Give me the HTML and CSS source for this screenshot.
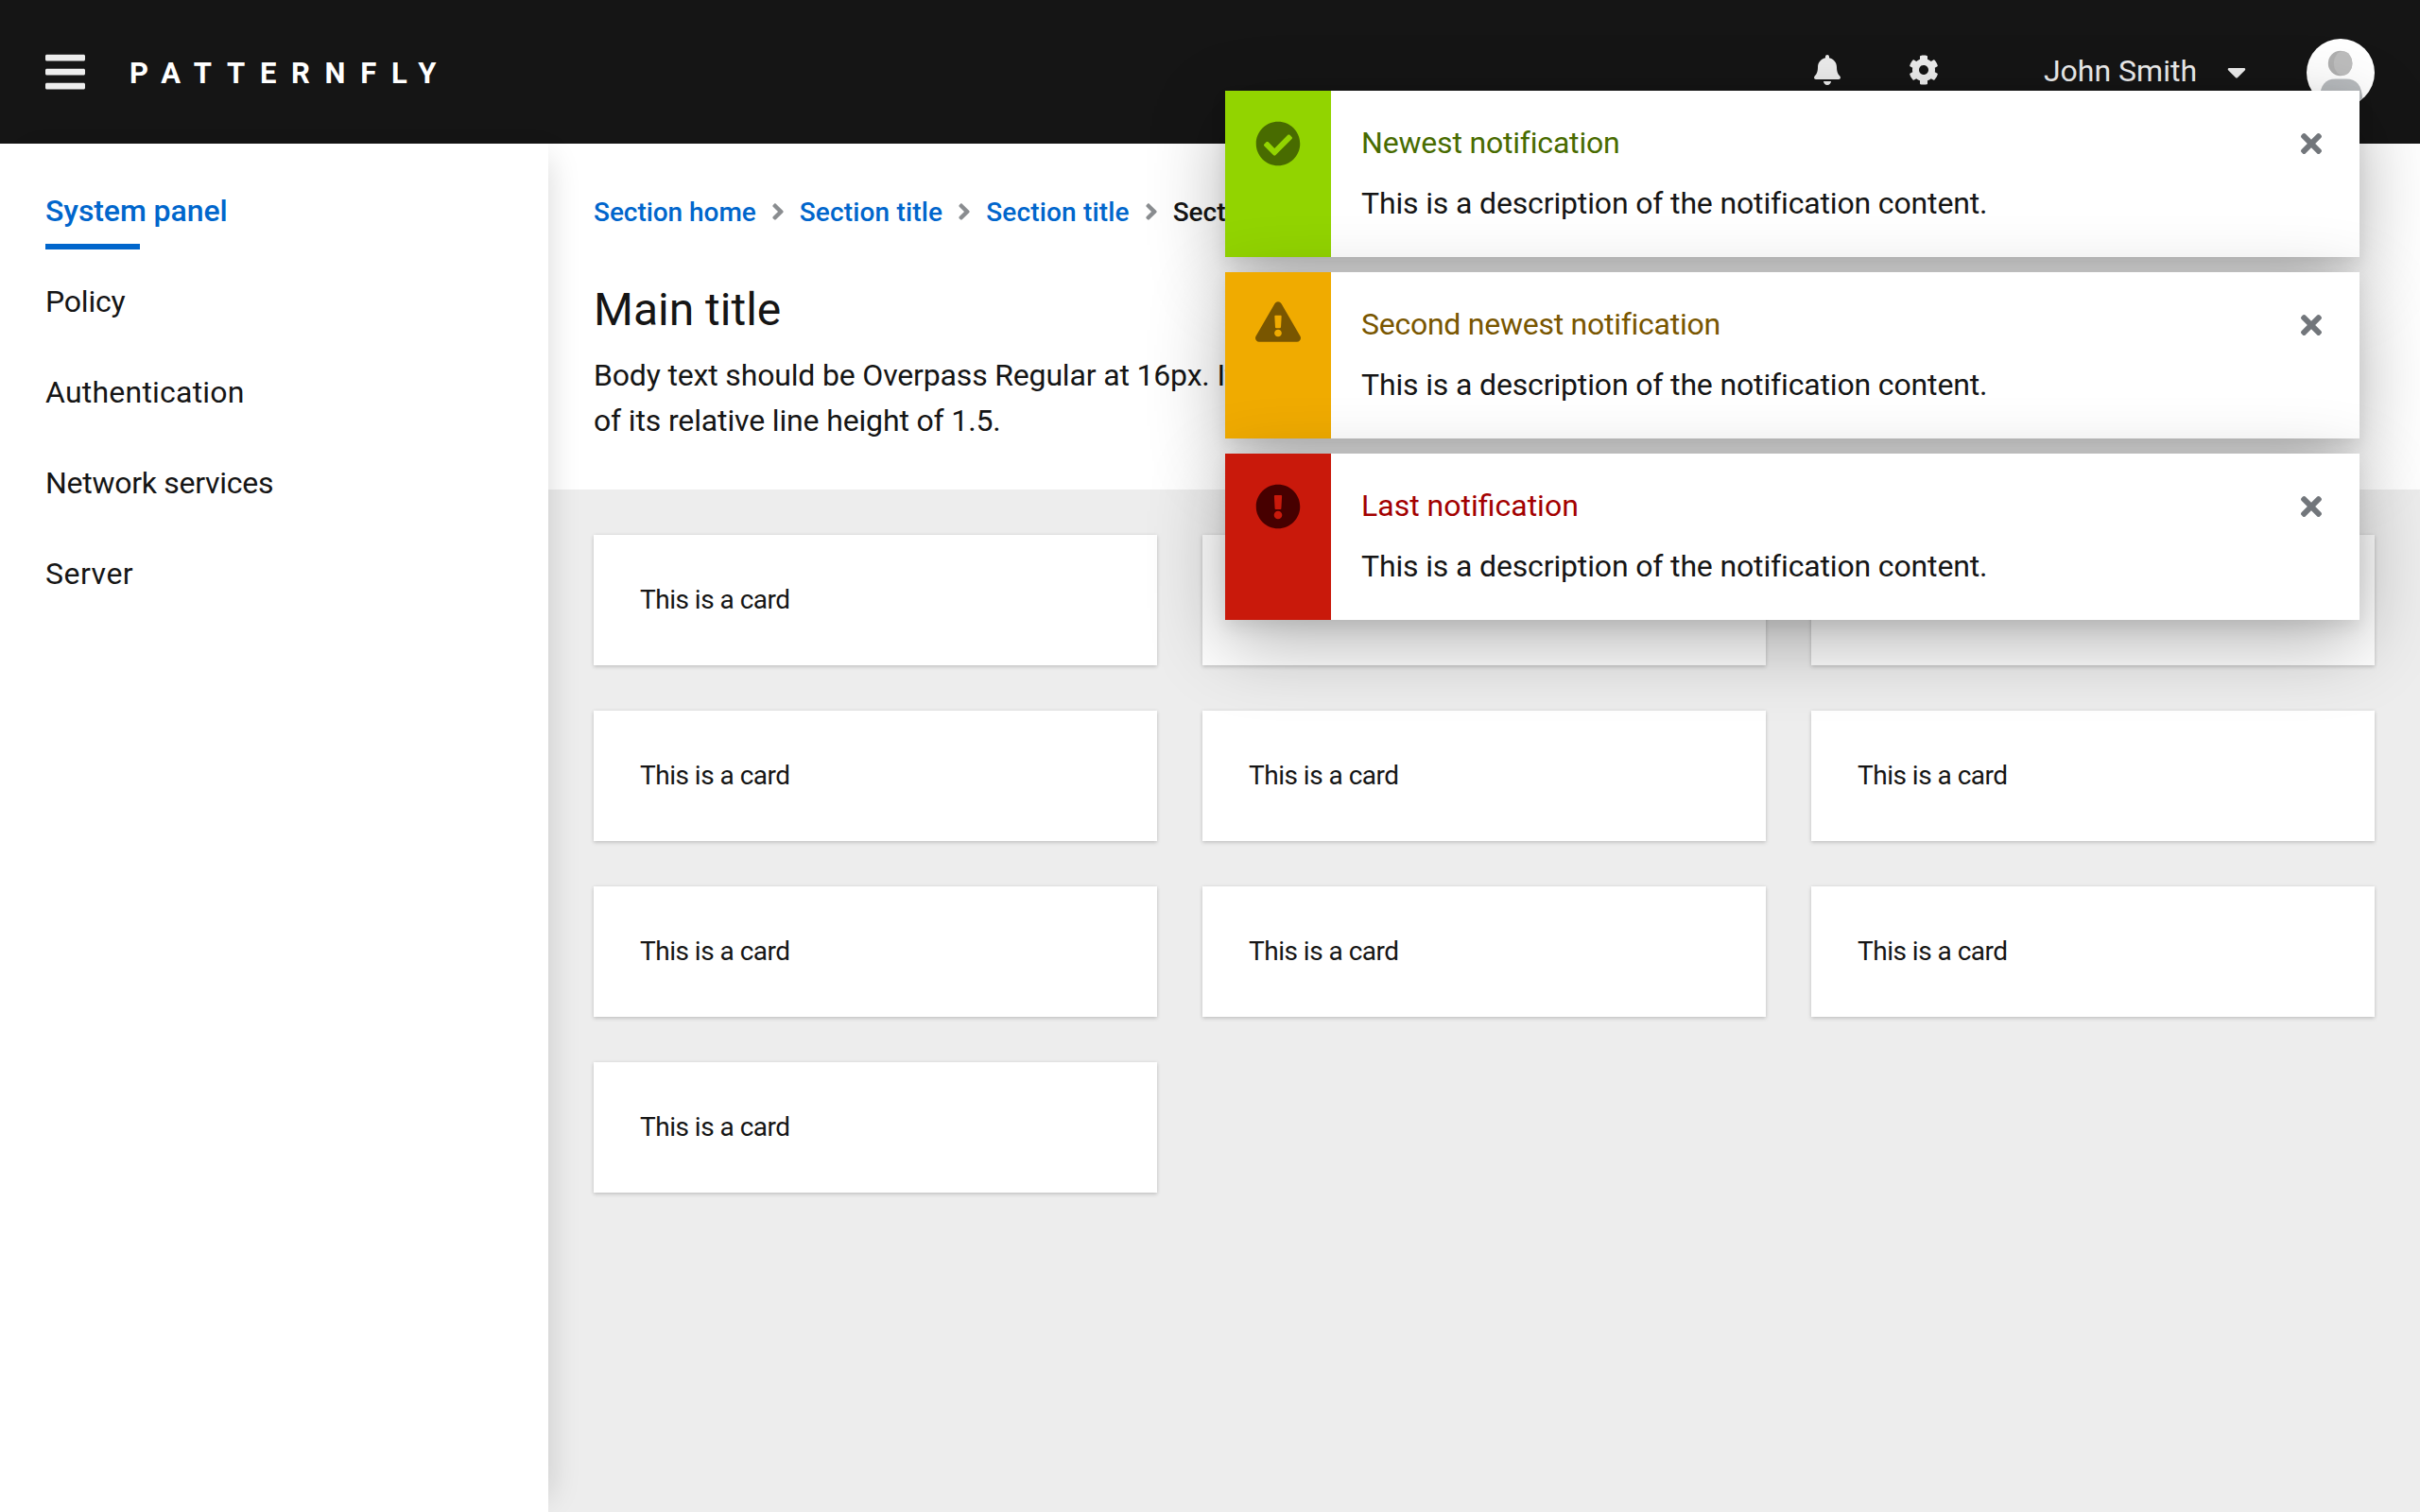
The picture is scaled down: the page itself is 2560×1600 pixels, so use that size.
FILE: index.html
```html
<!DOCTYPE html>
<html lang="en">
<head>
<meta charset="utf-8">
<title>PatternFly</title>
<link rel="stylesheet" href="styles.css">
</head>
<body>
<div class="page">
  <header class="header">
    <button class="nav-toggle" aria-label="Navigation"><svg viewBox="0 0 448 512" width="42" height="48"><path d="M16 132h416c8.837 0 16-7.163 16-16V76c0-8.837-7.163-16-16-16H16C7.163 60 0 67.163 0 76v40c0 8.837 7.163 16 16 16zm0 160h416c8.837 0 16-7.163 16-16v-40c0-8.837-7.163-16-16-16H16c-8.837 0-16 7.163-16 16v40c0 8.837 7.163 16 16 16zm0 160h416c8.837 0 16-7.163 16-16v-40c0-8.837-7.163-16-16-16H16c-8.837 0-16 7.163-16 16v40c0 8.837 7.163 16 16 16z"/></svg></button>
    <div class="brand">PATTERNFLY</div>
    <div class="tools">
      <svg class="bell" viewBox="0 0 448 512" width="28" height="32"><path d="M224 512c35.320 0 63.970-28.650 63.970-64H160.030c0 35.350 28.650 64 63.970 64zm215.390-149.710c-19.320-20.760-55.470-51.990-55.470-154.290 0-77.700-54.480-139.900-127.940-155.160V32c0-17.670-14.320-32-31.980-32s-31.980 14.330-31.980 32v20.840C118.560 68.100 64.080 130.300 64.080 208c0 102.300-36.150 133.530-55.470 154.290-6 6.450-8.660 14.160-8.610 21.710.110 16.400 12.980 32 32.100 32h383.800c19.120 0 32-15.600 32.100-32 .050-7.550-2.610-15.270-8.610-21.710z"/></svg>
      <svg class="cog" viewBox="0 0 512 512" width="32" height="32"><path d="M487.400 315.700l-42.600-24.600c4.300-23.200 4.300-47 0-70.200l42.600-24.600c4.900-2.800 7.100-8.600 5.500-14-11.100-35.600-30-67.800-54.700-94.600-3.800-4.100-10-5.100-14.800-2.300L380.800 110c-17.900-15.400-38.500-27.300-60.800-35.100V25.800c0-5.600-3.900-10.500-9.400-11.700-36.700-8.200-74.300-7.800-109.200 0-5.500 1.200-9.400 6.100-9.400 11.700V75c-22.200 7.900-42.800 19.800-60.800 35.100L88.700 85.500c-4.900-2.800-11-1.900-14.800 2.300-24.700 26.700-43.600 58.900-54.700 94.600-1.700 5.400.6 11.200 5.500 14L67.300 221c-4.300 23.200-4.300 47 0 70.200l-42.600 24.600c-4.900 2.800-7.100 8.600-5.500 14 11.100 35.600 30 67.800 54.700 94.600 3.800 4.100 10 5.100 14.800 2.300l42.600-24.600c17.900 15.400 38.500 27.300 60.800 35.100v49.200c0 5.600 3.900 10.500 9.400 11.700 36.700 8.200 74.300 7.800 109.200 0 5.500-1.200 9.400-6.100 9.400-11.700v-49.200c22.200-7.900 42.800-19.800 60.800-35.100l42.600 24.600c4.900 2.800 11 1.900 14.800-2.300 24.700-26.700 43.600-58.900 54.700-94.600 1.500-5.500-.7-11.300-5.600-14.100zM256 336c-44.100 0-80-35.900-80-80s35.900-80 80-80 80 35.900 80 80-35.900 80-80 80z"/></svg>
      <span class="user">John Smith</span>
      <svg class="caret" viewBox="0 0 320 512" width="20" height="32"><path d="M31.300 192h257.300c17.800 0 26.700 21.500 14.100 34.100L174.100 354.800c-7.800 7.800-20.500 7.800-28.300 0L17.200 226.100C4.600 213.500 13.500 192 31.300 192z"/></svg>
      <svg class="avatar" viewBox="0 0 36 36" width="72" height="72">
        <defs><clipPath id="disc"><circle cx="18" cy="18" r="18"/></clipPath></defs>
        <g clip-path="url(#disc)">
          <path fill="#fff" d="M0 0h36v36H0z"/>
          <path fill="#b8bbbe" d="M6.800 32c.4-7.500 3-10.800 8.500-10.800h5.600c5.600 0 8.400 3.300 8.700 10.800v4H6.800z"/>
          <ellipse cx="17.800" cy="13" rx="6.400" ry="6.600" fill="#b0b0b0"/>
          <ellipse cx="19.300" cy="13" rx="4.900" ry="6.400" fill="#bdbdbd"/>
        </g>
      </svg>
    </div>
  </header>

  <div class="body">
    <nav class="sidebar">
      <a class="nav-item current"><span class="t-system">System panel</span></a>
      <a class="nav-item"><span class="t-policy">Policy</span></a>
      <a class="nav-item"><span class="t-auth">Authentication</span></a>
      <a class="nav-item"><span class="t-network">Network services</span></a>
      <a class="nav-item"><span class="t-server">Server</span></a>
    </nav>
    <main class="main">
      <section class="intro">
        <div class="crumbs">
          <a class="c-home">Section home</a><svg class="sep" viewBox="0 0 256 512" width="14" height="28"><use href="#chevron"/></svg>
          <a class="c-title">Section title</a><svg class="sep" viewBox="0 0 256 512" width="14" height="28"><use href="#chevron"/></svg>
          <a class="c-title">Section title</a><svg class="sep" viewBox="0 0 256 512" width="14" height="28"><use href="#chevron"/></svg>
          <span class="c-last">Section landing</span>
        </div>
        <h1 class="title">Main title</h1>
        <p class="lead"><span class="l-one">Body text should be Overpass Regular at 16px. It</span><br><span class="l-two">of its relative line height of 1.5.</span></p>
      </section>
      <section class="cards">
        <div class="card">This is a card</div><div class="card">This is a card</div><div class="card">This is a card</div>
        <div class="card">This is a card</div><div class="card">This is a card</div><div class="card">This is a card</div>
        <div class="card">This is a card</div><div class="card">This is a card</div><div class="card">This is a card</div>
        <div class="card">This is a card</div>
      </section>
    </main>
  </div>

  <div class="toasts">
    <div class="toast success">
      <div class="mark"><svg viewBox="0 0 512 512" width="48" height="48"><path d="M504 256c0 136.967-111.033 248-248 248S8 392.967 8 256 119.033 8 256 8s248 111.033 248 248zM227.314 387.314l184-184c6.248-6.248 6.248-16.379 0-22.627l-22.627-22.627c-6.248-6.249-16.379-6.249-22.628 0L216 308.118l-70.059-70.059c-6.248-6.248-16.379-6.248-22.628 0l-22.627 22.627c-6.248 6.248-6.248 16.379 0 22.627l104 104c6.249 6.249 16.379 6.249 22.628.001z"/></svg></div>
      <div class="content"><h2 class="h-new">Newest notification</h2><p>This is a description of the notification content.</p></div>
      <svg class="close" viewBox="0 0 352 512" width="22" height="32"><use href="#times"/></svg>
    </div>
    <div class="toast warning">
      <div class="mark"><svg viewBox="0 0 576 512" width="48" height="43"><path d="M569.517 440.013C587.975 472.007 564.806 512 527.940 512H48.054c-36.937 0-59.999-40.055-41.577-71.987L246.423 23.985c18.467-32.009 64.720-31.951 83.154 0l239.940 416.028zM288 354c-25.405 0-46 20.595-46 46s20.595 46 46 46 46-20.595 46-46-20.595-46-46-46zm-43.673-165.346l7.418 136c.347 6.364 5.609 11.346 11.982 11.346h48.546c6.373 0 11.635-4.982 11.982-11.346l7.418-136c.375-6.874-5.098-12.654-11.982-12.654h-63.383c-6.884 0-12.356 5.780-11.981 12.654z"/></svg></div>
      <div class="content"><h2 class="h-second">Second newest notification</h2><p>This is a description of the notification content.</p></div>
      <svg class="close" viewBox="0 0 352 512" width="22" height="32"><use href="#times"/></svg>
    </div>
    <div class="toast danger">
      <div class="mark"><svg viewBox="0 0 512 512" width="48" height="48"><path d="M504 256c0 136.997-111.043 248-248 248S8 392.997 8 256C8 119.083 119.043 8 256 8s248 111.083 248 248zm-248 50c-25.405 0-46 20.595-46 46s20.595 46 46 46 46-20.595 46-46-20.595-46-46-46zm-43.673-165.346l7.418 136c.347 6.364 5.609 11.346 11.982 11.346h48.546c6.373 0 11.635-4.982 11.982-11.346l7.418-136c.375-6.874-5.098-12.654-11.982-12.654h-63.383c-6.884 0-12.356 5.780-11.981 12.654z"/></svg></div>
      <div class="content"><h2 class="h-last">Last notification</h2><p>This is a description of the notification content.</p></div>
      <svg class="close" viewBox="0 0 352 512" width="22" height="32"><use href="#times"/></svg>
    </div>
  </div>
</div>

<svg class="symbols" width="0" height="0">
  <defs>
    <path id="times" d="M242.720 256l100.070-100.070c12.280-12.280 12.280-32.190 0-44.480l-22.240-22.240c-12.280-12.280-32.190-12.280-44.480 0L176 189.280 75.930 89.210c-12.280-12.280-32.190-12.280-44.480 0L9.210 111.450c-12.280 12.280-12.280 32.190 0 44.480L109.280 256 9.210 356.070c-12.280 12.280-12.280 32.190 0 44.480l22.240 22.240c12.280 12.280 32.200 12.280 44.480 0L176 322.720l100.070 100.070c12.280 12.280 32.200 12.280 44.480 0l22.240-22.240c12.280-12.280 12.280-32.190 0-44.480L242.720 256z"/>
    <path id="chevron" d="M224.300 273l-136 136c-9.400 9.400-24.600 9.400-33.900 0l-22.600-22.600c-9.400-9.400-9.400-24.600 0-33.900l96.400-96.400-96.400-96.400c-9.400-9.400-9.400-24.600 0-33.900L54.300 103c9.400-9.400 24.600-9.400 33.900 0l136 136c9.500 9.400 9.500 24.600.1 34z"/>
  </defs>
</svg>
</body>
</html>
```
FILE: styles.css
```css
* { box-sizing: border-box; }

body {
  margin: 0;
  font-family: Roboto, "Liberation Sans", sans-serif;
  font-size: 32px;
  line-height: 48px;
  color: #151515;
}

h1, h2, p { margin: 0; font-weight: 400; }
svg { display: block; flex: none; fill: currentColor; }
span, a, h2 { white-space: nowrap; }

.page {
  position: relative;
  display: flex;
  flex-direction: column;
  width: 2560px;
  height: 1600px;
  overflow: hidden;
}

/* Masthead */
.header {
  display: flex;
  align-items: center;
  height: 152px;
  flex: none;
  padding: 0 48px;
  background: #151515;
  color: #ededed;
}
.nav-toggle { padding: 0; border: 0; background: none; color: inherit; }
.brand {
  margin-left: 47px;
  padding-top: 4px;
  color: #fff;
  font-size: 31px;
  font-weight: 700;
  letter-spacing: 15.7px;
}
.tools { display: flex; align-items: center; margin-left: auto; }
.bell { margin: 0 72px 4px 0; }
.cog { margin: 0 111px 4px 0; }
.user { margin: -2px 32px 0 0; }
.caret { margin-right: 64px; }
.avatar { margin-top: 2px; }

/* Sidebar */
.body { display: flex; flex: 1; min-height: 0; }
.sidebar {
  position: relative;
  z-index: 1;
  width: 580px;
  flex: none;
  padding: 24px 48px;
  background: #fff;
  box-shadow: 16px 0 32px -16px rgba(3, 3, 3, .16);
}
.nav-item { display: block; height: 96px; padding-top: 23px; }
.current { color: #06c; font-weight: 500; }
.current::after {
  content: "";
  display: block;
  width: 100px;
  height: 6px;
  margin-top: 11px;
  background: #06c;
}
.t-system { letter-spacing: -.08px; }
.t-policy { letter-spacing: -.2px; }
.t-auth { letter-spacing: .22px; }
.t-network { letter-spacing: -.28px; }
.t-server { letter-spacing: .5px; }

/* Page content */
.main { flex: 1; background: #ededed; }
.intro { height: 366px; padding: 52px 48px 0; background: #fff; }
.crumbs {
  display: flex;
  align-items: center;
  height: 42px;
  font-size: 28px;
  line-height: 42px;
  font-weight: 500;
}
.crumbs a { color: #06c; }
.c-home { letter-spacing: -.05px; }
.c-title { letter-spacing: .16px; }
.sep { margin: -2px 16px 0; color: #8a8d90; }
.title { margin-top: 51px; font-size: 48px; line-height: 62px; }
.lead { margin-top: 14px; }
.l-one { letter-spacing: -.17px; }
.l-two { letter-spacing: -.15px; }

.cards {
  display: grid;
  grid-template-columns: repeat(3, 596px);
  gap: 48px;
  padding: 48px;
}
.card {
  height: 138px;
  padding: 48px 49px;
  background: #fff;
  font-size: 28px;
  line-height: 42px;
  letter-spacing: -.5px;
  box-shadow: 0 2px 4px rgba(3, 3, 3, .14), 0 0 4px rgba(3, 3, 3, .08);
}

/* Toast notifications */
.toasts {
  position: absolute;
  z-index: 2;
  top: 96px;
  right: 64px;
  display: flex;
  flex-direction: column;
  gap: 16px;
  width: 1200px;
}
.toast {
  display: flex;
  height: 176px;
  background: #fff;
  box-shadow: 0 24px 80px rgba(3, 3, 3, .3), 0 8px 16px rgba(3, 3, 3, .08);
}
.mark { display: flex; justify-content: center; width: 112px; padding-top: 32px; }
.content { flex: 1; padding: 31px 0 0 32px; }
.content h2 { font-size: 32px; line-height: 48px; }
.content p { margin-top: 16px; letter-spacing: -.15px; }
.content .h-new { letter-spacing: -.19px; }
.content .h-second { letter-spacing: -.26px; }
.close { margin: 40px 40px 0 0; color: #72767b; }

.success .mark { background: #92d400; color: #486b00; }
.success h2 { color: #486b00; }
.warning .mark { background: #f0ab00; color: #795600; padding-top: 31px; }
.warning h2 { color: #795600; }
.danger .mark { background: #c9190b; color: #470000; }
.danger h2 { color: #a30000; }

.symbols { position: absolute; }
```
